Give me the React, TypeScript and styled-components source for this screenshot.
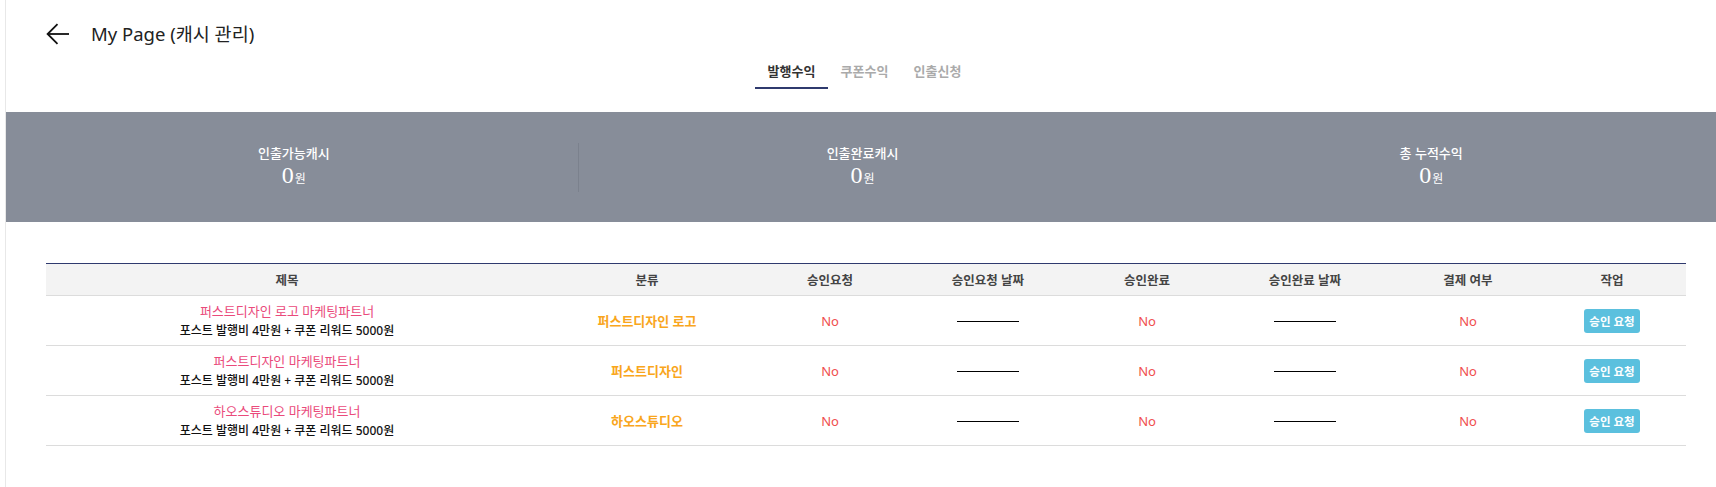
import styled, { createGlobalStyle } from 'styled-components';

const GlobalStyle = createGlobalStyle`
  html, body {
    margin: 0;
    padding: 0;
    background: #ffffff;
  }
  body {
    font-family: "Noto Sans", "Noto Sans CJK KR", sans-serif;
    color: #222;
  }
`;

const Page = styled.div`
  margin-left: 5px;
  border-left: 1px solid #e8e8e8;
  min-height: 487px;
  box-sizing: border-box;
`;

const TopBar = styled.header`
  display: flex;
  align-items: center;
  gap: 21px;
  height: 40px;
  padding: 14px 0 0 40px;
`;

const BackButton = styled.button`
  display: flex;
  align-items: center;
  padding: 0;
  border: none;
  background: none;
  cursor: pointer;
`;

const PageTitle = styled.h1`
  margin: 0;
  font-size: 18.5px;
  font-weight: 400;
  color: #222;
  line-height: 40px;
`;

const Tabs = styled.nav`
  display: flex;
  justify-content: center;
  padding-left: 7px;
`;

const Tab = styled.button<{ $active?: boolean }>`
  width: 73px;
  padding: 8px 0 7px;
  border: none;
  border-bottom: 2px solid ${(p) => (p.$active ? '#2f3a6e' : 'transparent')};
  background: none;
  font-family: inherit;
  font-size: 13px;
  font-weight: 700;
  line-height: 18px;
  color: ${(p) => (p.$active ? '#333' : '#aaa')};
  cursor: pointer;
`;

const StatsBand = styled.section`
  display: flex;
  align-items: center;
  height: 110px;
  margin-top: 23px;
  padding-left: 4px;
  background: #878d99;
`;

const StatItem = styled.div<{ $divider?: boolean }>`
  flex: 1;
  height: 49px;
  padding-top: 1px;
  box-sizing: border-box;
  text-align: center;
  color: #fff;
  border-right: 1px solid ${(p) => (p.$divider ? '#7b818d' : 'transparent')};
`;

const StatLabel = styled.div`
  font-size: 13px;
  font-weight: 500;
  line-height: 18px;
`;

const StatValue = styled.div`
  font-family: "Liberation Serif", serif;
  font-size: 24px;
  line-height: 26px;
`;

const Won = styled.span`
  font-family: "Noto Sans", "Noto Sans CJK KR", sans-serif;
  font-size: 12px;
  margin-left: 1px;
`;

const TableWrap = styled.div`
  padding: 41px 30px 0 40px;
`;

const Table = styled.table`
  width: 1640px;
  table-layout: fixed;
  border-collapse: collapse;
  border-top: 1px solid #2f3a6e;
  font-size: 12.5px;
`;

const HeadCell = styled.th`
  height: 31px;
  padding: 0;
  background: #f3f3f3;
  border-bottom: 1px solid #dcdcdc;
  font-weight: 700;
  color: #444;
  text-align: center;
`;

const Row = styled.tr`
  height: 50px;
  border-bottom: 1px solid #dcdcdc;
`;

const Cell = styled.td`
  padding: 0;
  text-align: center;
  vertical-align: middle;
`;

const ItemTitle = styled.div`
  color: #ea4a7b;
  font-size: 13px;
  line-height: 19px;
`;

const ItemSub = styled.div`
  color: #111;
  font-size: 12px;
  font-weight: 500;
  line-height: 19px;
`;

const Category = styled.span`
  color: #f9a61c;
  font-size: 13px;
  font-weight: 700;
`;

const No = styled.span`
  color: #f04e4e;
  font-size: 13px;
`;

const Dash = styled.span`
  display: inline-block;
  width: 62px;
  border-top: 1px solid #000;
  vertical-align: middle;
`;

const RequestButton = styled.button`
  width: 56px;
  height: 24px;
  padding: 0;
  border: none;
  border-radius: 3px;
  background: #5bc0de;
  color: #fff;
  font-family: inherit;
  font-size: 11.5px;
  font-weight: 700;
  cursor: pointer;
`;

const columns = [
  { label: '제목', width: 482 },
  { label: '분류', width: 238 },
  { label: '승인요청', width: 128 },
  { label: '승인요청 날짜', width: 188 },
  { label: '승인완료', width: 130 },
  { label: '승인완료 날짜', width: 186 },
  { label: '결제 여부', width: 140 },
  { label: '작업', width: 148 },
];

const rows = [
  { title: '퍼스트디자인 로고 마케팅파트너', category: '퍼스트디자인 로고' },
  { title: '퍼스트디자인 마케팅파트너', category: '퍼스트디자인' },
  { title: '하오스튜디오 마케팅파트너', category: '하오스튜디오' },
];

const stats = ['인출가능캐시', '인출완료캐시', '총 누적수익'];

export default function App() {
  return (
    <>
      <GlobalStyle />
      <Page>
        <TopBar>
          <BackButton aria-label="back">
            <svg width="24" height="22" viewBox="0 0 24 22" fill="none" stroke="#111" strokeWidth="1.8">
              <path d="M23 11H2" />
              <path d="M11.5 1.2 1.6 11l9.9 9.8" />
            </svg>
          </BackButton>
          <PageTitle>My Page (캐시 관리)</PageTitle>
        </TopBar>

        <Tabs>
          <Tab $active>발행수익</Tab>
          <Tab>쿠폰수익</Tab>
          <Tab>인출신청</Tab>
        </Tabs>

        <StatsBand>
          {stats.map((s, i) => (
            <StatItem key={s} $divider={i === 0}>
              <StatLabel>{s}</StatLabel>
              <StatValue>
                0<Won>원</Won>
              </StatValue>
            </StatItem>
          ))}
        </StatsBand>

        <TableWrap>
          <Table>
            <colgroup>
              {columns.map((c) => (
                <col key={c.label} style={{ width: c.width }} />
              ))}
            </colgroup>
            <thead>
              <tr>
                {columns.map((c) => (
                  <HeadCell key={c.label}>{c.label}</HeadCell>
                ))}
              </tr>
            </thead>
            <tbody>
              {rows.map((r) => (
                <Row key={r.title}>
                  <Cell>
                    <ItemTitle>{r.title}</ItemTitle>
                    <ItemSub>포스트 발행비 4만원 + 쿠폰 리워드 5000원</ItemSub>
                  </Cell>
                  <Cell>
                    <Category>{r.category}</Category>
                  </Cell>
                  <Cell>
                    <No>No</No>
                  </Cell>
                  <Cell>
                    <Dash />
                  </Cell>
                  <Cell>
                    <No>No</No>
                  </Cell>
                  <Cell>
                    <Dash />
                  </Cell>
                  <Cell>
                    <No>No</No>
                  </Cell>
                  <Cell>
                    <RequestButton>승인 요청</RequestButton>
                  </Cell>
                </Row>
              ))}
            </tbody>
          </Table>
        </TableWrap>
      </Page>
    </>
  );
}
